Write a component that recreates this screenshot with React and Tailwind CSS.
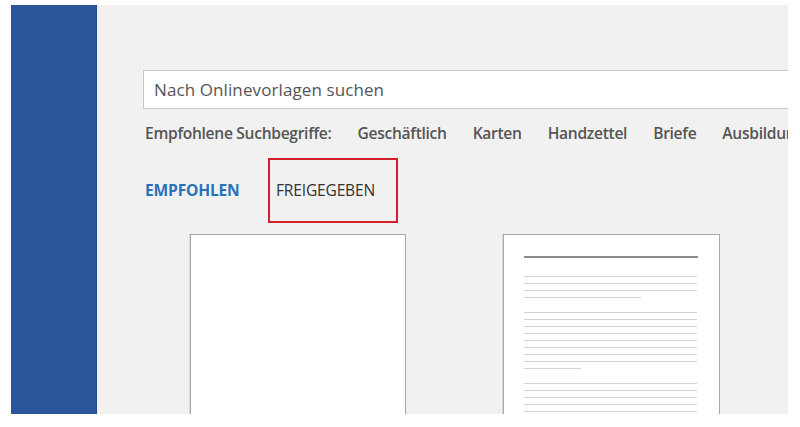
import React from "react";

const terms = ["Geschäftlich", "Karten", "Handzettel", "Briefe", "Ausbildung"];

const Lines = ({ count, lastWidth }) => (
  <div className="flex flex-col gap-[6px]">
    {Array.from({ length: count }).map((_, i) => (
      <div
        key={i}
        className="h-px bg-[#d2d2d2]"
        style={{ width: i === count - 1 && lastWidth ? lastWidth : 173 }}
      />
    ))}
  </div>
);

const App = () => {
  return (
    <div className="w-[800px] h-[427px] bg-white pt-[5px] pl-[11px] overflow-hidden font-['Open_Sans','Noto_Sans',sans-serif]">
      <div className="flex w-[777px] h-[409px]">
        {/* ------------Sidebar--------- */}
        <div className="w-[86px] h-full bg-[#2b579a] border-r border-[#1f4a8a]" />

        {/* ------------Main--------- */}
        <div className="flex-1 bg-[#f1f1f1] overflow-hidden pl-[46px] pt-[65px] flex flex-col">
          <div className="shrink-0 h-[39px] bg-white border-y border-l border-[#c6c6c6] flex items-center pl-[10px] -mr-4">
            <span className="text-[17px] text-[#555] tracking-[0.1px]">
              Nach Onlinevorlagen suchen
            </span>
          </div>

          <div className="shrink-0 flex items-center gap-[26px] pl-[2px] h-[50px] whitespace-nowrap text-[15.6px] font-semibold text-[#555] tracking-[-0.3px]">
            <span>Empfohlene Suchbegriffe:</span>
            {terms.map((t) => (
              <span key={t}>{t}</span>
            ))}
          </div>

          <div className="shrink-0 flex items-center pl-[2px]">
            <span className="text-[15.6px] font-bold text-[#2b71b8] tracking-[-0.2px] w-[123px]">
              EMPFOHLEN
            </span>
            <div className="w-[130px] h-[65px] border-2 border-[#d0202a] flex items-center pl-[6px] -mt-px">
              <span className="text-[15.6px] text-[#333] tracking-[-0.2px]">FREIGEGEBEN</span>
            </div>
          </div>

          <div className="shrink-0 flex gap-[97px] pl-[47px] mt-[11px]">
            <div className="w-[216px] h-[200px] bg-white border border-[#a8a8a8] shadow-[-1px_0_0_#d8d8d8]" />
            <div className="w-[217px] h-[200px] bg-white border border-[#a8a8a8] shadow-[-1px_0_0_#d8d8d8] pl-[20px] pt-[21px] flex flex-col">
              <div className="w-[174px] h-[2px] bg-[#8a8a8a]" />
              <div className="mt-[18px]">
                <Lines count={4} lastWidth={117} />
              </div>
              <div className="mt-[14px]">
                <Lines count={9} lastWidth={57} />
              </div>
              <div className="mt-[14px]">
                <Lines count={5} />
              </div>
            </div>
          </div>
        </div>
      </div>
    </div>
  );
};

export default App;
